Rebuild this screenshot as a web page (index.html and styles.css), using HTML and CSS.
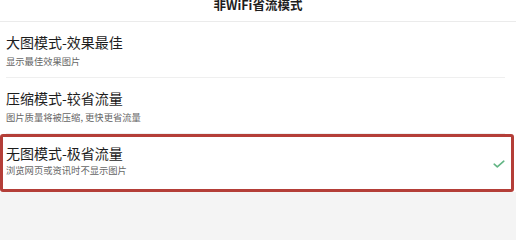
FILE: index.html
```html
<!DOCTYPE html>
<html lang="zh-CN">
<head>
<meta charset="utf-8">
<link rel="stylesheet" href="styles.css">
</head>
<body>
<header class="topbar">
  <h1 class="topbar-title">非WiFi省流模式</h1>
</header>
<ul class="options">
  <li class="option">
    <div class="option-text">
      <div class="option-title">大图模式-效果最佳</div>
      <div class="option-desc">显示最佳效果图片</div>
    </div>
  </li>
  <li class="option">
    <div class="option-text">
      <div class="option-title">压缩模式-较省流量</div>
      <div class="option-desc">图片质量将被压缩, 更快更省流量</div>
    </div>
  </li>
  <li class="option option-selected">
    <div class="option-text">
      <div class="option-title">无图模式-极省流量</div>
      <div class="option-desc">浏览网页或资讯时不显示图片</div>
    </div>
    <svg class="check" width="12" height="8" viewBox="0 0 12 8"><path d="M1.2 4.2 L4.3 6.9 L10.8 1.2" fill="none" stroke="#62b584" stroke-width="1.6" stroke-linecap="round" stroke-linejoin="round"/></svg>
  </li>
</ul>
</body>
</html>
```

FILE: styles.css
```css
* { box-sizing: border-box; }
html, body {
  margin: 0;
  padding: 0;
}
body {
  width: 516px;
  height: 205px;
  overflow: hidden;
  background: #f4f4f4;
  font-family: "Noto Sans CJK SC", "Noto Sans", sans-serif;
}
.topbar {
  height: 22px;
  background: #fff;
  border-bottom: 1px solid #ebebeb;
  display: flex;
  justify-content: center;
  align-items: flex-start;
  overflow: hidden;
}
.topbar-title {
  margin: -2px 0 0;
  font-size: 12.5px;
  line-height: 14px;
  font-weight: 700;
  color: #1e1e1e;
}
.options {
  list-style: none;
  margin: 0;
  padding: 0;
  background: #fff;
}
.option {
  height: 56px;
  padding: 11px 6px 0;
  display: flex;
  align-items: flex-start;
  position: relative;
}
.option::after {
  content: "";
  position: absolute;
  left: 6px;
  right: 11px;
  bottom: 0;
  height: 1px;
  background: #efefef;
}
.option-text {
  flex: 1;
}
.option-title {
  font-size: 14px;
  line-height: 18px;
  color: #1c1c1c;
}
.option-desc {
  margin-top: 3.5px;
  font-size: 9.3px;
  line-height: 12px;
  color: #666;
}
.option-selected {
  height: 58px;
  margin-right: 2px;
  padding: 7px 6px 0 3px;
  border: 3px solid #b43e38;
  border-radius: 3px;
  align-items: center;
  align-items: flex-start;
}
.option-selected::after { display: none; }
.option-selected .option-desc { margin-top: 2px; }
.check {
  margin-top: 16px;
  margin-right: 0;
}
```
